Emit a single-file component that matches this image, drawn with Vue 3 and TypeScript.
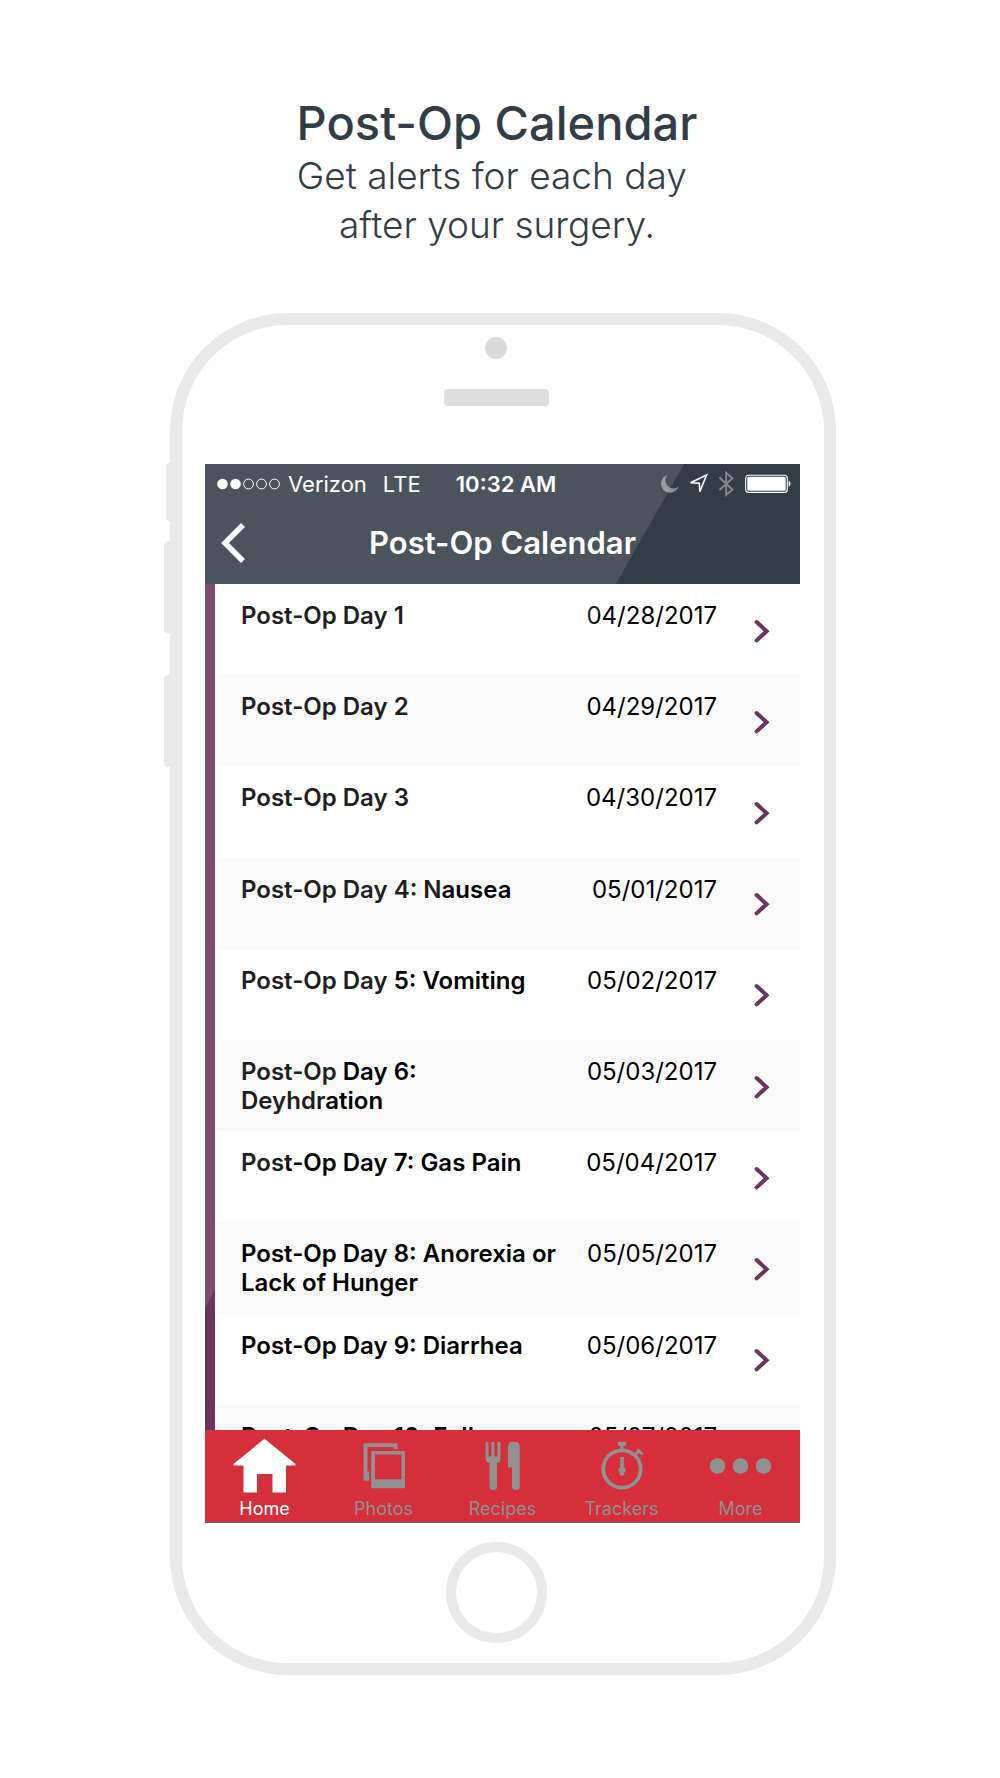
<script setup lang="ts">
interface DayEntry {
  title: string
  date: string
}

interface Tab {
  id: string
  label: string
}

const days: DayEntry[] = [
  { title: 'Post-Op Day 1', date: '04/28/2017' },
  { title: 'Post-Op Day 2', date: '04/29/2017' },
  { title: 'Post-Op Day 3', date: '04/30/2017' },
  { title: 'Post-Op Day 4: Nausea', date: '05/01/2017' },
  { title: 'Post-Op Day 5: Vomiting', date: '05/02/2017' },
  { title: 'Post-Op Day 6: Deyhdration', date: '05/03/2017' },
  { title: 'Post-Op Day 7: Gas Pain', date: '05/04/2017' },
  { title: 'Post-Op Day 8: Anorexia or Lack of Hunger', date: '05/05/2017' },
  { title: 'Post-Op Day 9: Diarrhea', date: '05/06/2017' },
  { title: 'Post-Op Day 10: Full', date: '05/07/2017' },
]

const tabs: Tab[] = [
  { id: 'home', label: 'Home' },
  { id: 'photos', label: 'Photos' },
  { id: 'recipes', label: 'Recipes' },
  { id: 'trackers', label: 'Trackers' },
  { id: 'more', label: 'More' },
]

const activeTab = 'home'
</script>

<template>
  <main class="page">
    <header class="intro">
      <h1>Post-Op Calendar</h1>
      <p>Get alerts for each day&nbsp;<br />after your surgery.</p>
    </header>

    <section class="phone">
      <span class="side mute"></span>
      <span class="side vol-up"></span>
      <span class="side vol-down"></span>
      <div class="top">
        <span class="camera"></span>
        <span class="speaker"></span>
      </div>

      <div class="screen">
        <div class="bar">
          <div class="status">
            <div class="carrier">
              <svg width="64" height="12" viewBox="0 0 64 12" aria-hidden="true">
                <circle cx="5.500" cy="6" r="5.3" fill="#fff" />
                <circle cx="18.500" cy="6" r="5.3" fill="#fff" />
                <g fill="none" stroke="#fff" stroke-width="1">
                  <circle cx="31.500" cy="6" r="4.9" />
                  <circle cx="44.500" cy="6" r="4.9" />
                  <circle cx="57.500" cy="6" r="4.9" />
                </g>
              </svg>
              <span>Verizon</span>
              <span class="lte">LTE</span>
            </div>
            <time class="clock">10:32 AM</time>
            <svg class="indicators" width="131" height="28" viewBox="0 0 131 28" aria-hidden="true">
              <path d="M7.5 5A9 9 0 1 0 18.6 16.5A8 8 0 0 1 7.5 5Z" fill="#8b9096" />
              <path d="M46.6 5L30.5 12.7L39.3 13.2L39.8 21.6Z" fill="none" stroke="#fff" stroke-width="1.5" />
              <path d="M59.5 7.5L72.500 19.5L66.2 25V2.800L72.500 8.2L59.5 20" fill="none" stroke="#858b91" stroke-width="1.8" />
              <rect x="85.7" y="5.2" width="41.6" height="17.2" rx="3" fill="none" stroke="#fff" stroke-width="1.1" />
              <rect x="87.3" y="6.8" width="38.4" height="14" rx="1.5" fill="#fff" />
              <path d="M128.6 11C131.2 11 131.2 16.6 128.6 16.6Z" fill="#fff" />
            </svg>
          </div>
          <div class="nav">
            <button type="button" class="back" aria-label="Back">
              <svg width="26" height="42" viewBox="0 0 26 42" aria-hidden="true">
                <path d="M23 3L5 21L23 39" fill="none" stroke="#fff" stroke-width="5.500" />
              </svg>
            </button>
            <h2>Post-Op Calendar</h2>
          </div>
        </div>

        <div class="scroller">
          <ul class="days">
            <li v-for="day in days" :key="day.date">
              <a href="#" class="day">
                <span class="name">{{ day.title }}</span>
                <time class="date">{{ day.date }}</time>
                <svg class="chevron" width="16" height="24" viewBox="0 0 16 24" aria-hidden="true">
                  <path d="M2.6 3L12.6 12.2L2.6 21.4" fill="none" stroke="#6a355a" stroke-width="4" stroke-linecap="round" />
                </svg>
              </a>
            </li>
          </ul>
        </div>

        <nav class="tabs">
          <a v-for="tab in tabs" :key="tab.id" href="#" class="tab" :class="{ active: tab.id === activeTab }">
            <svg width="64" height="56" viewBox="0 0 64 56" fill="currentColor" aria-hidden="true">
              <path v-if="tab.id === 'home'" d="M31.500 .8L62.500 26V27.500H53V54.500H39.500V36H24V54.500H10.500V27.500H.5V26Z" />
              <g v-else-if="tab.id === 'photos'">
                <path d="M11.500 5.200H45.500V11H41.800V9H15.500V33.500H17.200V42.800H11.500Z" />
                <path fill-rule="evenodd" d="M19.200 13H53V50.300H19.200ZM23 16.600V41.300H49.500V16.600Z" />
              </g>
              <g v-else-if="tab.id === 'recipes'">
                <path d="M14.500 5Q14.500 3.700 16 3.700Q17.500 3.700 17.500 5V18.500H20.300V5Q20.300 3.700 22 3.700Q23.500 3.700 23.500 5V18.500H26.300V5Q26.300 3.700 28 3.700Q29.500 3.700 29.500 5V20Q29.500 24.500 26 25V49Q26 52 22.300 52Q18.500 52 18.500 49V25Q14.500 24.500 14.500 20Z" />
                <path d="M37 9Q37 3.700 41.500 3.700H43.500Q48.800 3.700 48.800 9V49Q48.800 52 45 52Q41 52 41 49V29.500H37Z" />
              </g>
              <g v-else-if="tab.id === 'trackers'">
                <circle cx="32" cy="31" r="18.700" fill="none" stroke="currentColor" stroke-width="3.800" />
                <path d="M28 3.700H36.200V7.700H33.700V12H30.300V7.700H28Z" />
                <path d="M44 17L50 12.500M47.500 11.500L52.500 16.500" stroke="currentColor" stroke-width="3" />
                <path d="M30.200 19H33.900V29L36 32L34 35.500V37.500H30V35.500L28 32L30.200 29Z" />
              </g>
              <g v-else>
                <circle cx="8.500" cy="28" r="7.800" />
                <circle cx="31.500" cy="28" r="7.800" />
                <circle cx="54.500" cy="28" r="7.800" />
              </g>
            </svg>
            <span>{{ tab.label }}</span>
          </a>
        </nav>
        <span class="glare"></span>
      </div>

      <div class="bottom"><span class="home-key"></span></div>
    </section>
  </main>
</template>

<style>
body {
  margin: 0;
  background: #fff;
}
</style>

<style scoped>
* {
  box-sizing: border-box;
}

.page {
  padding: 95px 0 103px;
  font-family: Inter, 'Liberation Sans', sans-serif;
}

.intro {
  padding-right: 6px;
  color: #333d47;
  text-align: center;
}

h1 {
  margin: 0;
  font-size: 47px;
  line-height: 56px;
  font-weight: 500;
}

.intro p {
  margin: 0;
  font-size: 37px;
  line-height: 49px;
  font-weight: 300;
}

.phone {
  position: relative;
  width: 100%;
  max-width: 666px;
  margin: 64px auto 0;
  left: 3px;
  padding: 0 24px 0 23px;
  border: 12px solid #e9e9e9;
  border-radius: 118px;
}

.side {
  position: absolute;
  left: -18px;
  width: 6px;
  height: 92px;
  border-radius: 4px 0 0 4px;
  background: #e9e9e9;
}

.mute {
  top: 138px;
  left: -16px;
  width: 4px;
  height: 58px;
}

.vol-up {
  top: 216px;
}

.vol-down {
  top: 350px;
}

.top {
  display: flex;
  flex-direction: column;
  align-items: center;
  gap: 30px;
  padding: 12px 13px 58px 0;
}

.camera {
  width: 22px;
  height: 22px;
  border-radius: 50%;
  background: #dad9d8;
}

.speaker {
  width: 105px;
  height: 17px;
  border-radius: 4px;
  background: #dedede;
}

.screen {
  position: relative;
}

.bar {
  background: #333d46;
  color: #fff;
}

.status {
  display: grid;
  grid-template-columns: 1fr auto 1fr;
  align-items: center;
  height: 40px;
  padding: 0 9px 0 12px;
  font-size: 22px;
  line-height: 28px;
}

.carrier {
  display: flex;
  align-items: center;
  gap: 7px;
}

.lte {
  margin-left: 9px;
}

.clock {
  padding-left: 4px;
  font-weight: 600;
}

.indicators {
  justify-self: end;
}

.nav {
  display: grid;
  grid-template-columns: 50px 1fr 50px;
  align-items: center;
  height: 80px;
  padding-bottom: 2px;
}

.back {
  display: flex;
  padding: 0 0 0 15px;
  border: 0;
  background: none;
}

h2 {
  margin: 0;
  font-size: 31px;
  line-height: 36px;
  font-weight: 600;
  text-align: center;
}

.scroller {
  height: 846px;
  overflow: hidden;
  border-left: 10px solid #6a355a;
}

.days {
  display: grid;
  grid-auto-rows: 1fr;
  min-height: 912px;
  margin: 0;
  padding: 0;
  list-style: none;
}

.days li {
  display: flex;
}

.days li:nth-child(even) {
  background: #f9f9f9;
}

.day {
  flex: 1;
  display: flex;
  justify-content: space-between;
  padding: 17px 30px 15px 26px;
  color: #000;
  font-size: 24px;
  line-height: 29px;
  text-decoration: none;
}

.name {
  flex: 0 1 320px;
  font-weight: 600;
}

.date {
  flex: 1;
  text-align: right;
  white-space: nowrap;
}

.chevron {
  flex: none;
  align-self: center;
  margin-left: 37px;
}

.tabs {
  display: grid;
  grid-template-columns: repeat(5, 1fr);
  height: 93px;
  border-bottom: 1px solid #5f6b7a;
  background: #d42f3a;
}

.tab {
  display: flex;
  flex-direction: column;
  align-items: center;
  padding-top: 8px;
  color: #919191;
  font-size: 18px;
  line-height: 30px;
  text-decoration: none;
}

.tab.active {
  color: #fff;
}

.glare {
  position: absolute;
  inset: 0;
  background: rgba(255, 255, 255, 0.12);
  clip-path: polygon(0 0, 80.5% 0, 0 79.7%);
  pointer-events: none;
}

.bottom {
  display: flex;
  justify-content: center;
  padding: 19px 12px 20px 0;
}

.home-key {
  width: 101px;
  height: 101px;
  border: 10px solid #e9e9e9;
  border-radius: 50%;
}
</style>
